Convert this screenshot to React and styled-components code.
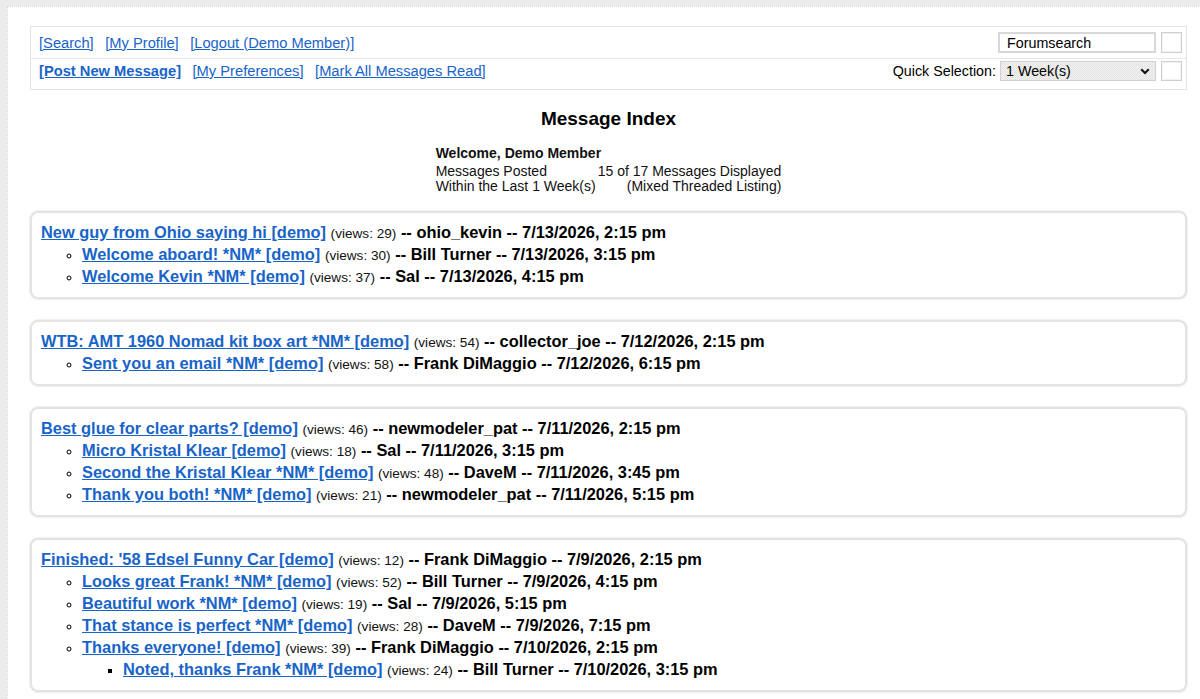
import React from "react";
import styled, { createGlobalStyle } from "styled-components";

const Global = createGlobalStyle`
  html, body { overflow: hidden; }
  body {
    margin: 0;
    background: #ececec;
    font-family: "Liberation Sans", Arial, sans-serif;
    color: #000;
  }
`;

const Page = styled.div`
  margin: 6px 0 0 7px;
  width: 1204px;
  box-sizing: border-box;
  background: #fff;
  border: 1px dotted #d6d6d6;
  padding: 19px 23px 40px 22px;
  min-height: 760px;
`;

const Nav = styled.div`
  border: 1px solid #e4e4e4;
  display: grid;
  grid-template-rows: 31px 31px;
`;

const NavRow = styled.div`
  display: flex;
  align-items: center;
  justify-content: space-between;
  padding: 0 4px ${(p) => (p.$divided ? 6 : 0)}px 8px;
  border-top: ${(p) => (p.$divided ? "1px solid #e8e8e8" : "none")};
`;

const Links = styled.div`
  display: flex;
  gap: 11.5px;
  font-size: 14.7px;
`;

const NavLink = styled.a`
  color: #1864c8;
  text-decoration: underline;
  font-weight: ${(p) => (p.$bold ? "bold" : "normal")};
  cursor: pointer;
`;

const Tools = styled.div`
  display: flex;
  align-items: center;
  gap: 5px;
  font-size: 14.3px;
`;

const SearchInput = styled.input`
  width: 158px;
  height: 21px;
  box-sizing: border-box;
  border: 2px solid #d8d8d8;
  padding: 0 7px;
  font-family: "Liberation Sans", Arial, sans-serif;
  font-size: 14.3px;
  color: #000;
  background: #fff;
  outline: none;
`;

const SquareButton = styled.button`
  width: 21px;
  height: ${(p) => p.$h || 21}px;
  box-sizing: border-box;
  border: 1px solid #cfcfcf;
  box-shadow: inset 0 0 0 1px #f2f2f2;
  background: #fff;
  padding: 0;
`;

const Label = styled.span`
  margin-right: -1px;
`;

const SelectWrap = styled.div`
  position: relative;
  width: 156px;
  height: 20px;
`;

const Select = styled.select`
  appearance: none;
  width: 100%;
  height: 100%;
  box-sizing: border-box;
  border: 1px solid #d0d0d0;
  padding: 0 0 0 5px;
  font-family: "Liberation Sans", Arial, sans-serif;
  font-size: 14.3px;
  color: #000;
  background: repeating-conic-gradient(#e2e2e2 0 25%, #f3f3f3 0 50%) 0 0 / 2px 2px;
  outline: none;
`;

const Chevron = styled.svg`
  position: absolute;
  right: 6px;
  top: 7px;
  pointer-events: none;
`;

const Heading = styled.h1`
  margin: 18px 0 0;
  text-align: center;
  font-size: 19px;
  line-height: 22px;
  font-weight: bold;
`;

const Summary = styled.div`
  width: max-content;
  margin: 16px auto 0;
  display: grid;
  grid-template-columns: auto auto;
  column-gap: 2px;
  font-size: 14px;
  line-height: 15px;
  color: #111;
`;

const Welcome = styled.div`
  grid-column: 1 / 3;
  font-weight: bold;
  margin-bottom: 3px;
`;

const Cell = styled.div`
  text-align: ${(p) => (p.$right ? "right" : "left")};
`;

const Threads = styled.div`
  margin-top: 17px;
  display: flex;
  flex-direction: column;
  gap: 21px;
`;

const Card = styled.div`
  border: 2px solid #e3e3e3;
  border-radius: 8px;
  box-shadow: 0 0 0 1px #f1f1f1, 0 1px 2px rgba(0, 0, 0, 0.06);
  padding: 8px 9px 10px;
`;

const List = styled.ul`
  margin: 0;
  padding-left: ${(p) => (p.$root ? 0 : 41)}px;
  list-style: ${(p) => p.$marker};
`;

const Item = styled.li`
  line-height: 22px;
  font-size: 16.4px;
  &::marker {
    font-size: 13.5px;
  }
`;

const Subject = styled.a`
  color: #1864c8;
  font-weight: bold;
  text-decoration: underline;
  cursor: pointer;
`;

const Views = styled.span`
  font-size: 13.6px;
  line-height: 1;
  color: #111;
`;

const Meta = styled.span`
  font-weight: bold;
  color: #000;
`;

const markers = ["none", "circle", "square", "disc"];

function Message({ msg, depth }) {
  return (
    <Item>
      <Subject>{msg.t}</Subject> <Views>(views: {msg.v})</Views>{" "}
      <Meta>-- {msg.m}</Meta>
      {msg.c && (
        <List $marker={markers[depth + 1]}>
          {msg.c.map((c, i) => (
            <Message key={i} msg={c} depth={depth + 1} />
          ))}
        </List>
      )}
    </Item>
  );
}

const threads = [
  {
    t: "New guy from Ohio saying hi [demo]", v: 29, m: "ohio_kevin -- 7/13/2026, 2:15 pm",
    c: [
      { t: "Welcome aboard! *NM* [demo]", v: 30, m: "Bill Turner -- 7/13/2026, 3:15 pm" },
      { t: "Welcome Kevin *NM* [demo]", v: 37, m: "Sal -- 7/13/2026, 4:15 pm" },
    ],
  },
  {
    t: "WTB: AMT 1960 Nomad kit box art *NM* [demo]", v: 54, m: "collector_joe -- 7/12/2026, 2:15 pm",
    c: [{ t: "Sent you an email *NM* [demo]", v: 58, m: "Frank DiMaggio -- 7/12/2026, 6:15 pm" }],
  },
  {
    t: "Best glue for clear parts? [demo]", v: 46, m: "newmodeler_pat -- 7/11/2026, 2:15 pm",
    c: [
      { t: "Micro Kristal Klear [demo]", v: 18, m: "Sal -- 7/11/2026, 3:15 pm" },
      { t: "Second the Kristal Klear *NM* [demo]", v: 48, m: "DaveM -- 7/11/2026, 3:45 pm" },
      { t: "Thank you both! *NM* [demo]", v: 21, m: "newmodeler_pat -- 7/11/2026, 5:15 pm" },
    ],
  },
  {
    t: "Finished: '58 Edsel Funny Car [demo]", v: 12, m: "Frank DiMaggio -- 7/9/2026, 2:15 pm",
    c: [
      { t: "Looks great Frank! *NM* [demo]", v: 52, m: "Bill Turner -- 7/9/2026, 4:15 pm" },
      { t: "Beautiful work *NM* [demo]", v: 19, m: "Sal -- 7/9/2026, 5:15 pm" },
      { t: "That stance is perfect *NM* [demo]", v: 28, m: "DaveM -- 7/9/2026, 7:15 pm" },
      {
        t: "Thanks everyone! [demo]", v: 39, m: "Frank DiMaggio -- 7/10/2026, 2:15 pm",
        c: [{ t: "Noted, thanks Frank *NM* [demo]", v: 24, m: "Bill Turner -- 7/10/2026, 3:15 pm" }],
      },
    ],
  },
];

export default function App() {
  return (
    <>
      <Global />
      <Page>
        <Nav>
          <NavRow>
            <Links>
              <NavLink>[Search]</NavLink>
              <NavLink>[My Profile]</NavLink>
              <NavLink>[Logout (Demo Member)]</NavLink>
            </Links>
            <Tools>
              <SearchInput defaultValue="Forumsearch" />
              <SquareButton />
            </Tools>
          </NavRow>
          <NavRow $divided>
            <Links>
              <NavLink $bold>[Post New Message]</NavLink>
              <NavLink>[My Preferences]</NavLink>
              <NavLink>[Mark All Messages Read]</NavLink>
            </Links>
            <Tools>
              <Label>Quick Selection:</Label>
              <SelectWrap>
                <Select defaultValue="1w">
                  <option value="1w">1 Week(s)</option>
                  <option value="2w">2 Week(s)</option>
                  <option value="1m">1 Month(s)</option>
                </Select>
                <Chevron width="10" height="7" viewBox="0 0 10 7">
                  <path d="M1.2 1.3 L5 5 L8.8 1.3" fill="none" stroke="#111" strokeWidth="2" />
                </Chevron>
              </SelectWrap>
              <SquareButton $h={20} />
            </Tools>
          </NavRow>
        </Nav>

        <Heading>Message Index</Heading>

        <Summary>
          <Welcome>Welcome, Demo Member</Welcome>
          <Cell>Messages Posted</Cell>
          <Cell $right>15 of 17 Messages Displayed</Cell>
          <Cell>Within the Last 1 Week(s)</Cell>
          <Cell $right>(Mixed Threaded Listing)</Cell>
        </Summary>

        <Threads>
          {threads.map((th, i) => (
            <Card key={i}>
              <List $root $marker="none">
                <Message msg={th} depth={0} />
              </List>
            </Card>
          ))}
        </Threads>
      </Page>
    </>
  );
}
